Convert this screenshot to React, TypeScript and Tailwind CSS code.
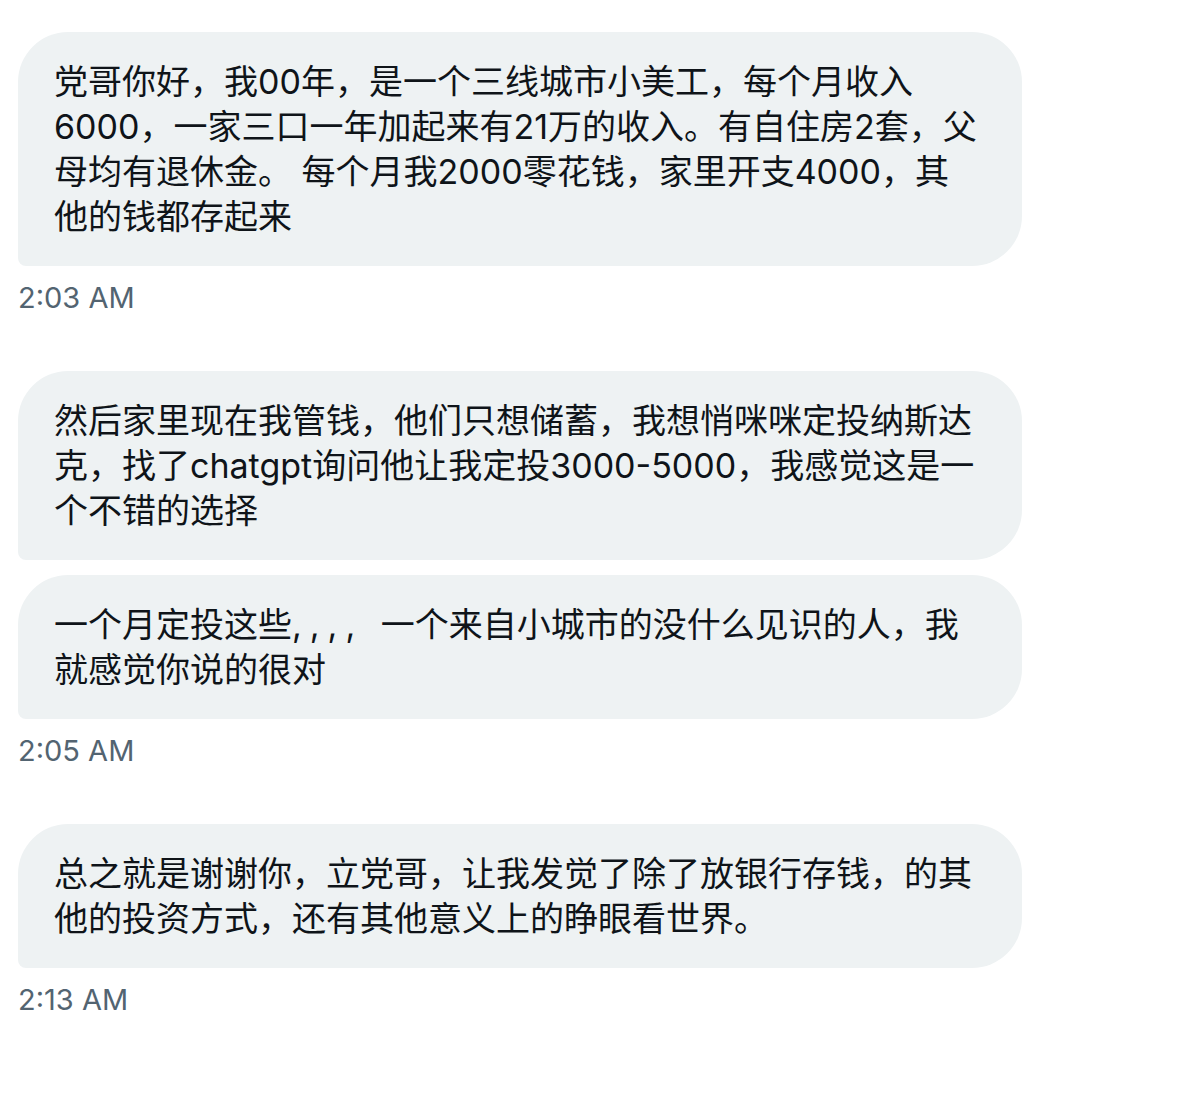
import React from 'react';

interface BubbleProps {
    lines: React.ReactNode[];
}

interface GroupProps {
    bubbles: React.ReactNode[][];
    time: string;
}

const Bubble: React.FC<BubbleProps> = ({ lines }) => (
    <div className="w-[1004px] rounded-[50px] rounded-bl-[8px] bg-[#eef2f3] px-[36px] py-[27px] text-[34px] leading-[45px] text-[#0f1419]">
        {lines.map((line, i) => (
            <div key={i} className="whitespace-pre">
                {line}
            </div>
        ))}
    </div>
);

const MessageGroup: React.FC<GroupProps> = ({ bubbles, time }) => (
    <div className="flex flex-col">
        <div className="flex flex-col gap-[15px]">
            {bubbles.map((lines, i) => (
                <Bubble key={i} lines={lines} />
            ))}
        </div>
        <div className="mt-[14px] text-[29px] leading-[36px] text-[#536471]">{time}</div>
    </div>
);

const messages: GroupProps[] = [
    {
        bubbles: [
            [
                '党哥你好，我00年，是一个三线城市小美工，每个月收入',
                '6000，一家三口一年加起来有21万的收入。有自住房2套，父',
                '母均有退休金。 每个月我2000零花钱，家里开支4000，其',
                '他的钱都存起来',
            ],
        ],
        time: '2:03 AM',
    },
    {
        bubbles: [
            [
                '然后家里现在我管钱，他们只想储蓄，我想悄咪咪定投纳斯达',
                '克，找了chatgpt询问他让我定投3000-5000，我感觉这是一',
                '个不错的选择',
            ],
            [
                <>
                    一个月定投这些<span className="tracking-[8px]">,,,, </span>一个来自小城市的没什么见识的人，我
                </>,
                '就感觉你说的很对',
            ],
        ],
        time: '2:05 AM',
    },
    {
        bubbles: [
            [
                '总之就是谢谢你，立党哥，让我发觉了除了放银行存钱，的其',
                '他的投资方式，还有其他意义上的睁眼看世界。',
            ],
        ],
        time: '2:13 AM',
    },
];

export default function App() {
    return (
        <div
            className="min-h-screen w-[1200px] bg-white pl-[18px] pt-[32px]"
            style={{ fontFamily: 'Inter, "Noto Sans CJK SC", sans-serif' }}
        >
            <div className="flex flex-col gap-[55px]">
                {messages.map((m, i) => (
                    <MessageGroup key={i} bubbles={m.bubbles} time={m.time} />
                ))}
            </div>
        </div>
    );
}
